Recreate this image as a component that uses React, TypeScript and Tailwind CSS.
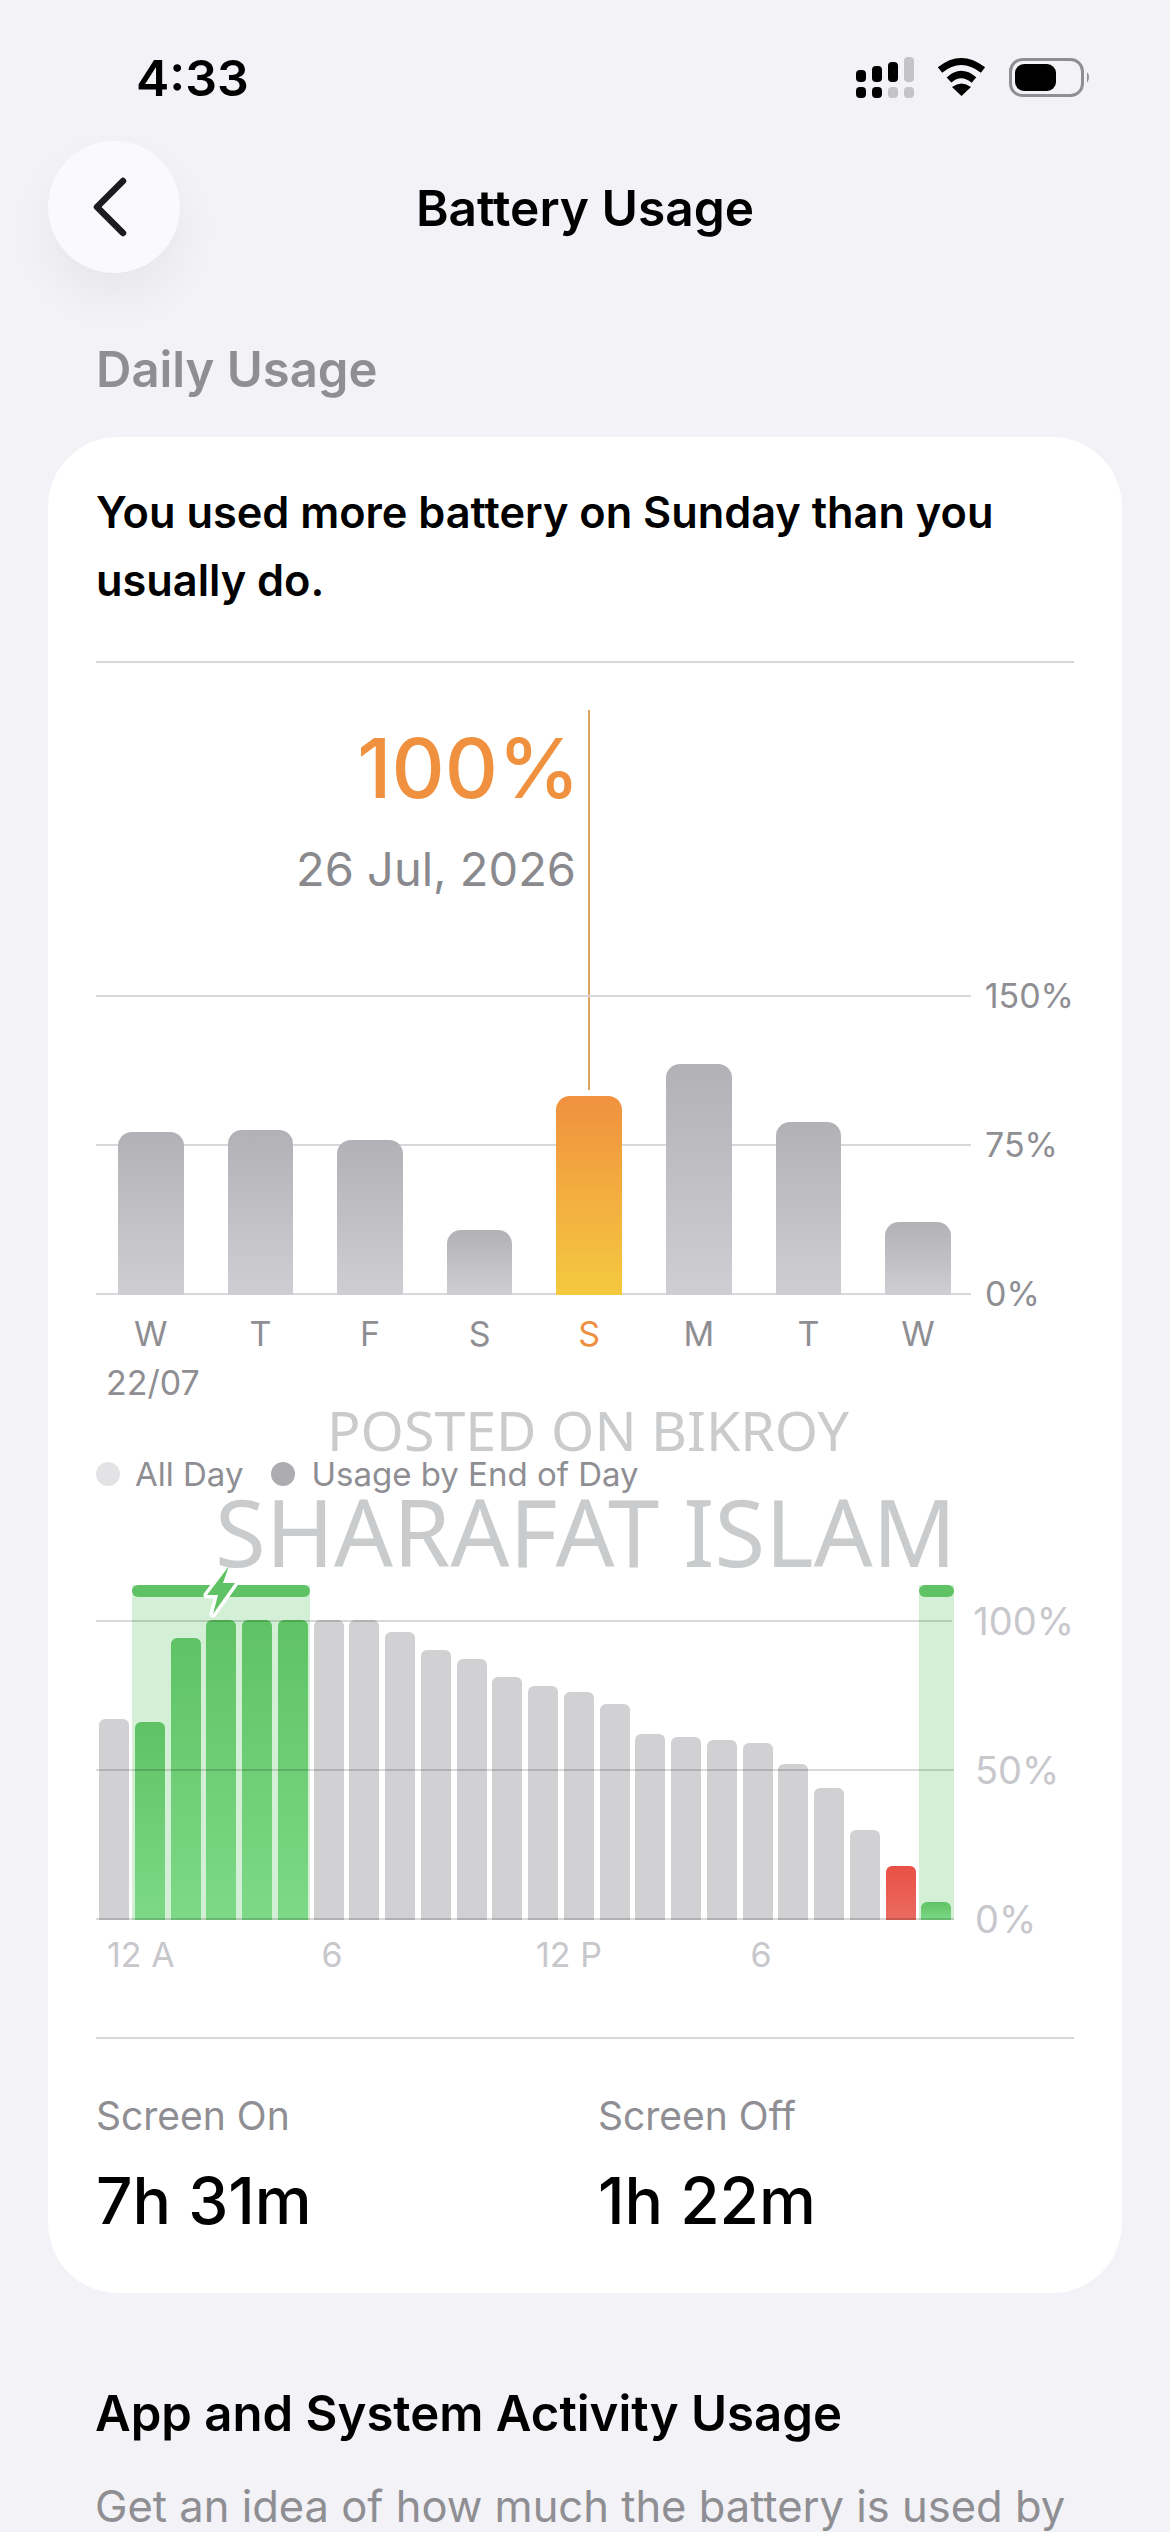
const WEEK = [
  { day: 'W', height: 163 },
  { day: 'T', height: 165 },
  { day: 'F', height: 155 },
  { day: 'S', height: 65 },
  { day: 'S', height: 199, active: true },
  { day: 'M', height: 231 },
  { day: 'T', height: 173 },
  { day: 'W', height: 73 },
]

const HOURS = [201, 198, 282, 300, 300, 300, 300, 300, 288, 270, 261, 243, 234, 228, 216, 186, 183, 180, 177, 156, 132, 90, 54, 18]

function hourColor(i: number) {
  if (i === 22) return 'bg-gradient-to-b from-[#ea5045] to-[#ea6b60]'
  if ((i >= 1 && i <= 5) || i === 23) return 'bg-gradient-to-b from-[#5fc264] to-[#7dd987]'
  return 'bg-[#d1d1d4]'
}

export default function App() {
  return (
    <div className="relative h-[2532px] w-[1170px] overflow-hidden bg-[#f2f2f7] font-['Inter',sans-serif]">
      {/* Status bar */}
      <div className="flex h-[141px] items-start justify-between pl-[136px] pr-[79px] pt-[48px]">
        <span className="text-[50px] font-semibold leading-[60px] text-black">4:33</span>
        <StatusIcons />
      </div>

      {/* Nav */}
      <div className="flex h-[132px] items-center px-12">
        <button className="flex h-[132px] w-[132px] shrink-0 items-center rounded-full bg-[#fafafc] pl-[44px] shadow-[0_24px_48px_rgba(0,0,0,0.05)]">
          <svg width="36" height="60" viewBox="0 0 36 60" fill="none">
            <path d="M31 4L5 30L31 56" stroke="#1c1c1e" strokeWidth="6.5" strokeLinecap="round" strokeLinejoin="round" />
          </svg>
        </button>
        <h1 className="flex-1 pt-[2px] text-center text-[49.6px] font-semibold leading-[60px] text-black">Battery Usage</h1>
        <div className="w-[132px] shrink-0" />
      </div>

      <h2 className="mt-[67px] pl-[96px] text-[49px] font-semibold leading-[60px] text-[#8e8e93]">Daily Usage</h2>

      {/* Card */}
      <div className="mx-12 mt-[37px] h-[1856px] rounded-[70px] bg-white px-12 pt-[41px]">
        <p className="text-[43.3px] font-semibold leading-[68px] text-black">
          You used more battery on Sunday than you
          <br />
          usually do.
        </p>
        <div className="mt-[47px] h-[2px] bg-[#d8d8dc]" />

        {/* Daily chart */}
        <div className="relative">
          <div className="absolute left-[492px] top-[47px] h-[380px] w-[2px] bg-[#dca662]" />
          <div className="w-[484px] pt-[55px] text-right">
            <div className="text-[82.5px] font-medium leading-[100px] text-[#f0913f]">100%</div>
            <div className="mr-[4px] mt-[21px] text-[47px] leading-[60px] text-[#8a8a8e]">26 Jul, 2026</div>
          </div>

          <div className="relative mt-[96px] flex h-[300px] flex-col justify-between">
            {['150%', '75%', '0%'].map((label) => (
              <div key={label} className="flex h-[2px] items-center gap-[14px]">
                <div className="h-[2px] w-[875px] bg-[#d8d8dc]" />
                <span className="text-[34px] leading-[40px] text-[#8e8e93]">{label}</span>
              </div>
            ))}
            <div className="absolute bottom-0 left-[22px] flex items-end gap-[44px]">
              {WEEK.map((bar, i) => (
                <div
                  key={i}
                  style={{ height: bar.height }}
                  className={`w-[65.6px] rounded-t-[14px] bg-gradient-to-b ${
                    bar.active ? 'from-[#f0913f] to-[#f4c93f]' : 'from-[#b2b2b6] to-[#cfcfd3]'
                  }`}
                />
              ))}
            </div>
          </div>

          <div className="mt-[19px] flex gap-[44px] pl-[22px]">
            {WEEK.map((bar, i) => (
              <span
                key={i}
                className={`w-[65.6px] text-center text-[34px] leading-[40px] ${bar.active ? 'text-[#ee8f3f]' : 'text-[#8e8e93]'}`}
              >
                {bar.day}
              </span>
            ))}
          </div>
          <div className="mt-[9px] pl-[10px] text-[34px] leading-[40px] text-[#8e8e93]">22/07</div>
        </div>

        {/* Legend */}
        <div className="mt-[51px] flex h-[40px] items-center text-[33px] leading-[40px] text-[#8e8e93]">
          <span className="h-6 w-6 rounded-full bg-[#e3e3e6]" />
          <span className="ml-[15px]">All Day</span>
          <span className="ml-7 h-6 w-6 rounded-full bg-[#adadb1]" />
          <span className="ml-4">Usage by End of Day</span>
        </div>

        {/* Hourly chart */}
        <div className="relative mt-[126px] flex h-[300px] flex-col justify-between">
          <div className="absolute bottom-0 left-[36px] top-[-35px] w-[178px] bg-[#d3f0d6]">
            <div className="h-3 rounded-full bg-[#5fc264]" />
          </div>
          <div className="absolute bottom-0 left-[823px] top-[-35px] w-[35px] bg-[#d3f0d6]">
            <div className="h-3 rounded-full bg-[#5fc264]" />
          </div>
          <div className="absolute bottom-0 left-[3.2px] flex items-end gap-[5.75px]">
            {HOURS.map((height, i) => (
              <div key={i} style={{ height }} className={`w-[30px] rounded-t-[6px] ${hourColor(i)}`} />
            ))}
          </div>
          <svg className="absolute left-[107px] top-[-58px]" width="36" height="56" viewBox="0 0 36 56">
            <path d="M26 4L4 33H15L10 52L32 21H20Z" fill="#5fc264" stroke="#fff" strokeWidth="7" strokeLinejoin="round" paintOrder="stroke" />
          </svg>
          {['100%', '50%', '0%'].map((label) => (
            <div key={label} className="relative flex h-[2px] items-center gap-[21px]">
              <div className="h-[2px] w-[858px] bg-black/15" />
              <span className="text-[38px] leading-[44px] text-[#c7c7cc]">{label}</span>
            </div>
          ))}
        </div>

        <div className="mt-[15px] flex pl-[11px] text-[34px] leading-[40px] text-[#c7c7cc]">
          {['12 A', '6', '12 P', '6'].map((label, i) => (
            <span key={i} className="w-[214.5px]">{label}</span>
          ))}
        </div>

        <div className="mt-[62px] h-[2px] bg-[#d8d8dc]" />

        {/* Screen time */}
        <div className="mt-[54px] grid grid-cols-[502px_1fr]">
          <Stat label="Screen On" value="7h 31m" />
          <Stat label="Screen Off" value="1h 22m" />
        </div>
      </div>

      <div className="px-[95px]">
        <h3 className="mt-[90px] text-[49.1px] font-semibold leading-[60px] text-black">App and System Activity Usage</h3>
        <p className="mt-[33px] whitespace-nowrap text-[43.500px] leading-[60px] text-[#8e8e93]">Get an idea of how much the battery is used by</p>
      </div>

      {/* Watermark */}
      <div className="pointer-events-none absolute left-[327px] top-[1395px] font-['Noto_Sans',sans-serif] text-[55.5px] leading-[70px] text-[#c9cbcc]">
        POSTED ON BIKROY
      </div>
      <div className="pointer-events-none absolute left-[215px] top-[1476px] font-['Noto_Sans',sans-serif] text-[92.3px] leading-[110px] text-[#c9cbcc]">
        SHARAFAT ISLAM
      </div>
    </div>
  )
}

function Stat({ label, value }: { label: string; value: string }) {
  return (
    <div>
      <div className="text-[39px] leading-[46px] text-[#8e8e93]">{label}</div>
      <div className="mt-[24px] text-[64px] font-medium leading-[76px] text-black">{value}</div>
    </div>
  )
}

function StatusIcons() {
  return (
    <svg className="mt-[9px]" width="235" height="41" viewBox="0 0 235 41" fill="none">
      {/* Signal */}
      <rect x="0" y="13" width="10" height="12" rx="4" fill="#000" />
      <rect x="16" y="9" width="10" height="16" rx="4" fill="#000" />
      <rect x="32" y="5" width="10" height="20" rx="4" fill="#000" />
      <rect x="48" y="0" width="10" height="25" rx="4" fill="#c4c4c8" />
      <rect x="0" y="30" width="10" height="11" rx="4" fill="#000" />
      <rect x="16" y="30" width="10" height="11" rx="4" fill="#000" />
      <rect x="32" y="30" width="10" height="11" rx="4" fill="#c4c4c8" />
      <rect x="48" y="30" width="10" height="11" rx="4" fill="#c4c4c8" />
      {/* Wifi */}
      <path d="M84 13Q105 -4 127 13" stroke="#000" strokeWidth="7" />
      <path d="M93 23Q105 12 118 23" stroke="#000" strokeWidth="7" />
      <path d="M105.500 39L96 30Q105.500 23 115 30Z" fill="#000" />
      {/* Battery */}
      <rect x="154.500" y="2.500" width="72" height="36" rx="12" fill="none" stroke="#8e8e93" strokeWidth="3" />
      <rect x="159" y="7" width="41" height="27" rx="9" fill="#000" />
      <path d="M231 15Q235 20 231 26Z" fill="#8e8e93" />
    </svg>
  )
}
